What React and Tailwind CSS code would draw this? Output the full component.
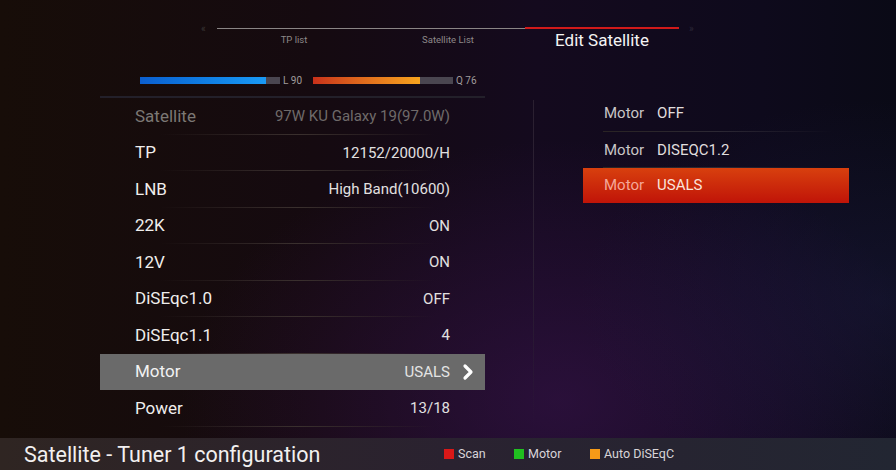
import { ChevronRight } from 'lucide-react'

const rows = [
  { label: 'Satellite', value: '97W KU Galaxy 19(97.0W)', dim: true },
  { label: 'TP', value: '12152/20000/H' },
  { label: 'LNB', value: 'High Band(10600)' },
  { label: '22K', value: 'ON' },
  { label: '12V', value: 'ON' },
  { label: 'DiSEqc1.0', value: 'OFF' },
  { label: 'DiSEqc1.1', value: '4' },
  { label: 'Motor', value: 'USALS', active: true },
  { label: 'Power', value: '13/18' },
]

const motorOptions = ['OFF', 'DISEQC1.2', 'USALS']

function SettingRow({ row }) {
  if (row.active) {
    return (
      <div className="flex items-center h-[36.5px] bg-[#6a6a6a] pl-[35px] pr-[5px]">
        <span className="flex-1 text-[17px] text-[#f2f2f2]">{row.label}</span>
        <span className="text-[15px] text-[#e4e4e4]">{row.value}</span>
        <ChevronRight className="w-[24px] h-[24px] ml-[6px] text-white" strokeWidth={3.2} />
      </div>
    )
  }
  return (
    <div className="relative flex items-center h-[36.5px] pl-[35px] pr-[35px]">
      <span className={`flex-1 text-[17px] ${row.dim ? 'text-[#7c7874]' : 'text-[#f0eeec]'}`}>{row.label}</span>
      <span className={`text-[15px] ${row.dim ? 'text-[#6f6a6a]' : 'text-[#e2e0e0]'}`}>{row.value}</span>
      <div className="absolute bottom-0 left-[60px] right-[50px] h-px bg-gradient-to-r from-transparent via-[#3a302e] to-transparent" />
    </div>
  )
}

export default function App() {
  return (
    <div
      className="relative w-[896px] h-[470px] overflow-hidden flex flex-col bg-[linear-gradient(90deg,#170d08_0%,#150a10_35%,#140a1e_60%,#0e0a1c_85%,#0a0a16_100%)]"
      style={{ fontFamily: 'Roboto, "Liberation Sans", sans-serif' }}
    >
      {/* purple glow */}
      <div className="absolute inset-0 bg-[radial-gradient(ellipse_380px_260px_at_560px_400px,rgba(60,20,80,0.55),transparent)]" />
      <div className="absolute inset-0 bg-[radial-gradient(ellipse_300px_200px_at_880px_300px,rgba(30,30,70,0.4),transparent)]" />

      <div className="relative flex-1 flex flex-col">
        {/* Tabs */}
        <div className="flex items-start pt-[27px] pl-[201px]">
          <span className="text-[#3c3838] text-[10px] leading-none mt-[-3px] w-[16px]">«</span>
          <div className="w-[462px]">
            <div className="flex h-[2px] items-end">
              <div className="w-[308px] h-px bg-[#8a8585]" />
              <div className="flex-1 h-[2px] bg-[#d11a1a]" />
            </div>
            <div className="flex h-[22px]">
              <div className="w-[154px] text-center text-[9.5px] leading-[14px] text-[#8d8888] pt-[4px]">TP list</div>
              <div className="w-[154px] text-center text-[9.5px] leading-[14px] text-[#8d8888] pt-[4px]">Satellite List</div>
              <div className="w-[154px] text-center text-[17px] leading-[24px] text-[#f4f4f4] mt-[-1px]">Edit Satellite</div>
            </div>
          </div>
          <span className="text-[#2c2838] text-[10px] leading-none mt-[-3px] ml-[10px]">»</span>
        </div>

        <div className="flex mt-[25px]">
          {/* Left panel */}
          <div className="ml-[100px] w-[385px]">
            <div className="flex items-center h-[8px] pl-[40px] text-[10px] text-[#a09c9c]">
              <div className="w-[126px] h-[7px] bg-gradient-to-r from-[#0c5fd0] to-[#1a9af5]" />
              <div className="w-[14px] h-[7px] bg-[#4a4650]" />
              <span className="ml-[3px] w-[30px]">L 90</span>
              <div className="w-[107px] h-[7px] bg-gradient-to-r from-[#c8301a] to-[#f7a41e]" />
              <div className="w-[33px] h-[7px] bg-[#4a4650]" />
              <span className="ml-[3px]">Q 76</span>
            </div>
            <div className="mt-[12px] h-[2px] bg-[#23202a]" />
            {rows.map((row) => (
              <SettingRow key={row.label} row={row} />
            ))}
          </div>

          {/* divider */}
          <div className="ml-[48px] mt-[24px] w-px h-[330px] bg-gradient-to-b from-[#2a2030] via-[#2c2034] to-transparent" />

          {/* Right panel */}
          <div className="ml-[49px] mt-[19px] w-[266px]">
            {motorOptions.map((opt) => {
              const active = opt === 'USALS'
              return (
                <div
                  key={opt}
                  className={`relative flex items-center pl-[21px] text-[15px] ${
                    active ? 'bg-[linear-gradient(180deg,#d8400e,#c01408)] h-[35px]' : 'h-[36.5px]'
                  }`}
                >
                  <span className={active ? 'text-[#f5a898]' : 'text-[#c9c6c6]'}>Motor</span>
                  <span className={`ml-[13px] ${active ? 'text-[#fbe2da]' : 'text-[#e0dede]'}`}>{opt}</span>
                  {!active && (
                    <div className="absolute bottom-0 left-[20px] right-[16px] h-px bg-gradient-to-r from-[#2a2424] via-[#2c2834] to-transparent" />
                  )}
                </div>
              )
            })}
          </div>
        </div>
      </div>

      {/* Bottom bar */}
      <div className="relative h-[32px] flex items-center bg-gradient-to-r from-[#2f2522] via-[#2a2230] to-[#222632]">
        <span className="ml-[24px] mt-[3px] text-[21.5px] text-[#f2f0f0] w-[420px]">Satellite - Tuner 1 configuration</span>
        <div className="flex items-center text-[12.5px] text-[#d8d4d8]">
          <span className="w-[10px] h-[10px] bg-[#d81818]" />
          <span className="ml-[4px] w-[56px]">Scan</span>
          <span className="w-[10px] h-[10px] bg-[#20c020]" />
          <span className="ml-[4px] w-[62px]">Motor</span>
          <span className="w-[10px] h-[10px] bg-[#f59a18]" />
          <span className="ml-[4px]">Auto DiSEqC</span>
        </div>
      </div>
    </div>
  )
}
